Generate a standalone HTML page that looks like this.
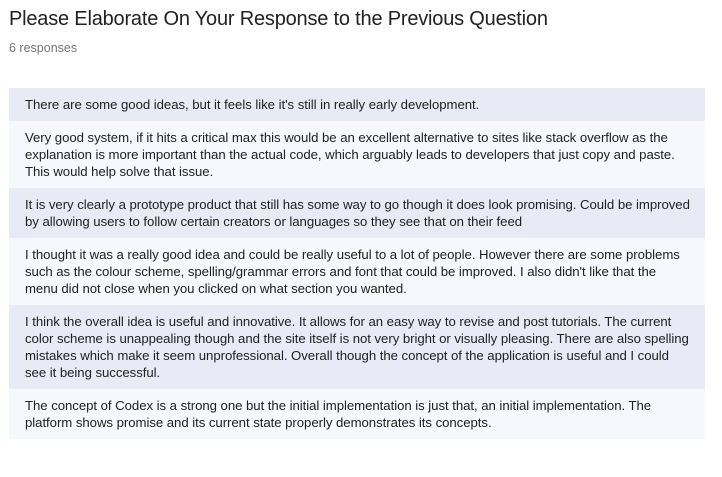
<!DOCTYPE html><html><head><style>
body{margin:0;background:#fff;font-family:"Liberation Sans",sans-serif;width:722px;height:477px;overflow:hidden}
h1{position:absolute;left:9px;top:8px;margin:0;font-weight:normal;font-size:20px;color:#212121;letter-spacing:-0.2px}
.sub{position:absolute;left:9px;top:41px;font-size:12.5px;color:#757575}
.list{position:absolute;left:9px;top:88px;width:696px}
.r{padding:8px 0 8px 16px;font-size:13.2px;line-height:17px;color:#212121;white-space:nowrap;letter-spacing:-0.05px}
.a{background:#e8eaf6}.b{background:#f7f8fd}
</style></head><body>
<h1>Please Elaborate On Your Response to the Previous Question</h1>
<div class="sub">6 responses</div>
<div class="list">
<div class="r a">There are some good ideas, but it feels like it's still in really early development.</div>
<div class="r b">Very good system, if it hits a critical max this would be an excellent alternative to sites like stack overflow as the<br>explanation is more important than the actual code, which arguably leads to developers that just copy and paste.<br>This would help solve that issue.</div>
<div class="r a">It is very clearly a prototype product that still has some way to go though it does look promising. Could be improved<br>by allowing users to follow certain creators or languages so they see that on their feed</div>
<div class="r b">I thought it was a really good idea and could be really useful to a lot of people. However there are some problems<br>such as the colour scheme, spelling/grammar errors and font that could be improved. I also didn't like that the<br>menu did not close when you clicked on what section you wanted.</div>
<div class="r a">I think the overall idea is useful and innovative. It allows for an easy way to revise and post tutorials. The current<br>color scheme is unappealing though and the site itself is not very bright or visually pleasing. There are also spelling<br>mistakes which make it seem unprofessional. Overall though the concept of the application is useful and I could<br>see it being successful.</div>
<div class="r b">The concept of Codex is a strong one but the initial implementation is just that, an initial implementation. The<br>platform shows promise and its current state properly demonstrates its concepts.</div>
</div>
</body></html>
